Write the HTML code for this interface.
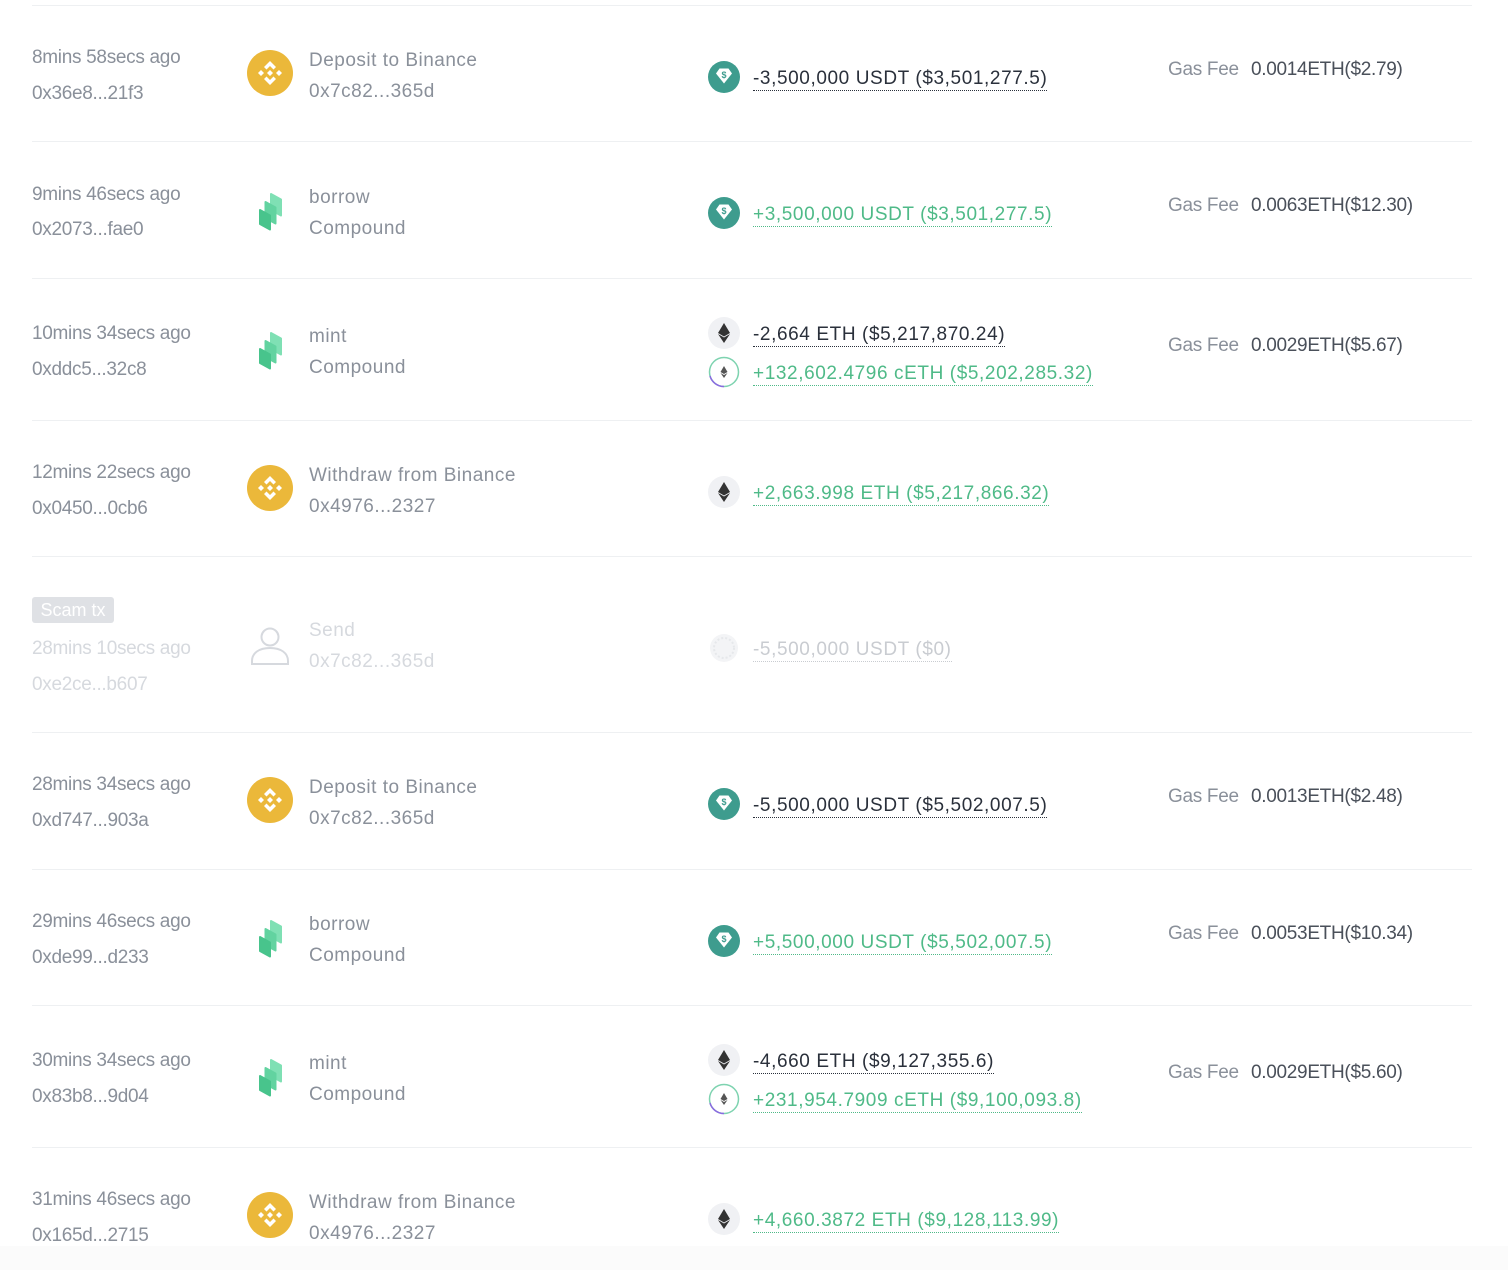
<!DOCTYPE html>
<html><head><meta charset="utf-8"><style>
body{margin:0;width:1508px;height:1270px;background:#fff;position:relative;overflow:hidden;font-family:"Liberation Sans",sans-serif;}
#w{position:absolute;left:0;top:2px;width:1508px;height:1270px}
.t{position:absolute;font-size:19px;line-height:22px;color:#8a909a;white-space:nowrap;letter-spacing:-0.3px}
.n{letter-spacing:0.5px}
.k{letter-spacing:0.6px}
.d{color:#2a303b}.g{color:#4fba88}.f{color:#d6d9de}
.u{border-bottom:1.5px dotted currentColor;padding-bottom:1px}
.sep{position:absolute;left:32px;width:1440px;height:1px;background:#eef0f2}
.i{position:absolute}
.tag{position:absolute;left:32px;top:595px;width:82px;height:26px;background:#dfe1e5;border-radius:3px;color:#fff;font-size:18px;line-height:26px;text-align:center}
</style></head><body>
<svg width="0" height="0" style="position:absolute">
<defs>
<symbol id="bn" viewBox="0 0 46 46"><circle cx="23" cy="23" r="23" fill="#ebb83a"/><g fill="#fff"><path d="M23 11l6 6-2.5 2.5L23 16l-3.5 3.5L17 17z"/><path d="M23 35l6-6-2.5-2.5L23 30l-3.5-3.5L17 29z"/><path d="M11 23l3-3 3 3-3 3z"/><path d="M29 23l3-3 3 3-3 3z"/><path d="M23 20l3 3-3 3-3-3z"/></g></symbol>
<symbol id="cp" viewBox="0 0 46 46">
<path d="M24 6l10 5.5v16l-10-5.5z" fill="#7fe0b4" stroke="#7fe0b4" stroke-width="2" stroke-linejoin="round"/>
<path d="M18.5 14l10 5.5v16l-10-5.5z" fill="#62d3a0" stroke="#62d3a0" stroke-width="2" stroke-linejoin="round"/>
<path d="M13 22l10 5.5v14l-10-5.5z" fill="#48c48c" stroke="#48c48c" stroke-width="2" stroke-linejoin="round"/>
</symbol>
<symbol id="us" viewBox="0 0 32 32"><circle cx="16" cy="16" r="16" fill="#3e9c8e"/><path d="M8 12.5l3.5-5h9l3.5 5-8 10z" fill="#fff"/><text x="16" y="17" font-size="9" font-weight="bold" fill="#3e9c8e" text-anchor="middle" font-family="Liberation Sans">$</text></symbol>
<symbol id="et" viewBox="0 0 32 32"><circle cx="16" cy="16" r="16" fill="#f0f1f4"/><path d="M16 6l-6 10 6 3.5 6-3.5z" fill="#333"/><path d="M16 20.5l-6-3.5 6 9 6-9z" fill="#333"/></symbol>
<symbol id="ce" viewBox="0 0 32 32"><circle cx="16" cy="16" r="14.5" fill="none" stroke="#7ed3b0" stroke-width="1.5"/><path d="M16 30.5A14.5 14.5 0 0 1 2 20" fill="none" stroke="#8a6be0" stroke-width="1.5"/><path d="M16 10l-3.5 6 3.5 2 3.5-2z" fill="#555"/><path d="M16 19l-3.5-2 3.5 5 3.5-5z" fill="#555"/></symbol>
</defs></svg>
<div class="sep" style="top:5px"></div><div class="sep" style="top:141px"></div><div class="sep" style="top:278px"></div><div class="sep" style="top:420px"></div><div class="sep" style="top:556px"></div><div class="sep" style="top:732px"></div><div class="sep" style="top:869px"></div><div class="sep" style="top:1005px"></div><div class="sep" style="top:1147px"></div>
<div id="w">
<!-- row1 -->
<div class="t" style="left:32px;top:45px">8mins 58secs ago</div><div class="t" style="left:32px;top:81px">0x36e8...21f3</div>
<svg class="i" style="left:247px;top:48px" width="46" height="46"><use href="#bn"/></svg>
<div class="t n" style="left:309px;top:48px">Deposit to Binance</div><div class="t n" style="left:309px;top:79px">0x7c82...365d</div>
<svg class="i" style="left:708px;top:59px" width="32" height="32"><use href="#us"/></svg>
<div class="t d k" style="left:753px;top:66px"><span class="u">-3,500,000 USDT ($3,501,277.5)</span></div>
<div class="t" style="left:1168px;top:57px">Gas Fee</div><div class="t" style="left:1251px;top:57px;color:#4a505a">0.0014ETH($2.79)</div>

<!-- row2 -->
<div class="t" style="left:32px;top:182px">9mins 46secs ago</div><div class="t" style="left:32px;top:217px">0x2073...fae0</div>
<svg class="i" style="left:247px;top:186px" width="46" height="46"><use href="#cp"/></svg>
<div class="t n" style="left:309px;top:185px">borrow</div><div class="t n" style="left:309px;top:216px">Compound</div>
<svg class="i" style="left:708px;top:195px" width="32" height="32"><use href="#us"/></svg>
<div class="t g k" style="left:753px;top:202px"><span class="u">+3,500,000 USDT ($3,501,277.5)</span></div>
<div class="t" style="left:1168px;top:193px">Gas Fee</div><div class="t" style="left:1251px;top:193px;color:#4a505a">0.0063ETH($12.30)</div>

<!-- row3 -->
<div class="t" style="left:32px;top:321px">10mins 34secs ago</div><div class="t" style="left:32px;top:357px">0xddc5...32c8</div>
<svg class="i" style="left:247px;top:325px" width="46" height="46"><use href="#cp"/></svg>
<div class="t n" style="left:309px;top:324px">mint</div><div class="t n" style="left:309px;top:355px">Compound</div>
<svg class="i" style="left:708px;top:315px" width="32" height="32"><use href="#et"/></svg>
<div class="t d k" style="left:753px;top:322px"><span class="u">-2,664 ETH ($5,217,870.24)</span></div>
<svg class="i" style="left:708px;top:354px" width="32" height="32"><use href="#ce"/></svg>
<div class="t g k" style="left:753px;top:361px"><span class="u">+132,602.4796 cETH ($5,202,285.32)</span></div>
<div class="t" style="left:1168px;top:333px">Gas Fee</div><div class="t" style="left:1251px;top:333px;color:#4a505a">0.0029ETH($5.67)</div>

<!-- row4 -->
<div class="t" style="left:32px;top:460px">12mins 22secs ago</div><div class="t" style="left:32px;top:496px">0x0450...0cb6</div>
<svg class="i" style="left:247px;top:463px" width="46" height="46"><use href="#bn"/></svg>
<div class="t n" style="left:309px;top:463px">Withdraw from Binance</div><div class="t n" style="left:309px;top:494px">0x4976...2327</div>
<svg class="i" style="left:708px;top:474px" width="32" height="32"><use href="#et"/></svg>
<div class="t g k" style="left:753px;top:481px"><span class="u">+2,663.998 ETH ($5,217,866.32)</span></div>

<!-- row5 scam -->
<div class="tag">Scam tx</div>
<div class="t f" style="left:32px;top:636px">28mins 10secs ago</div><div class="t f" style="left:32px;top:672px">0xe2ce...b607</div>
<svg class="i" style="left:248px;top:621px" width="44" height="44" viewBox="0 0 44 44"><circle cx="22" cy="14" r="8.5" fill="none" stroke="#d6d9de" stroke-width="2"/><path d="M4 41v-3c0-8 7-13 18-13s18 5 18 13v3z" fill="none" stroke="#d6d9de" stroke-width="2"/></svg>
<div class="t f n" style="left:309px;top:618px">Send</div><div class="t f n" style="left:309px;top:649px">0x7c82...365d</div>
<svg class="i" style="left:708px;top:630px" width="32" height="32"><circle cx="16" cy="16" r="14" fill="#f3f4f6"/><circle cx="16" cy="16" r="10" fill="none" stroke="#e6e8eb" stroke-width="2" stroke-dasharray="2 2"/></svg>
<div class="t f k" style="left:753px;top:637px;color:#c9ccd1"><span class="u">-5,500,000 USDT ($0)</span></div>

<!-- row6 -->
<div class="t" style="left:32px;top:772px">28mins 34secs ago</div><div class="t" style="left:32px;top:808px">0xd747...903a</div>
<svg class="i" style="left:247px;top:775px" width="46" height="46"><use href="#bn"/></svg>
<div class="t n" style="left:309px;top:775px">Deposit to Binance</div><div class="t n" style="left:309px;top:806px">0x7c82...365d</div>
<svg class="i" style="left:708px;top:786px" width="32" height="32"><use href="#us"/></svg>
<div class="t d k" style="left:753px;top:793px"><span class="u">-5,500,000 USDT ($5,502,007.5)</span></div>
<div class="t" style="left:1168px;top:784px">Gas Fee</div><div class="t" style="left:1251px;top:784px;color:#4a505a">0.0013ETH($2.48)</div>

<!-- row7 -->
<div class="t" style="left:32px;top:909px">29mins 46secs ago</div><div class="t" style="left:32px;top:945px">0xde99...d233</div>
<svg class="i" style="left:247px;top:913px" width="46" height="46"><use href="#cp"/></svg>
<div class="t n" style="left:309px;top:912px">borrow</div><div class="t n" style="left:309px;top:943px">Compound</div>
<svg class="i" style="left:708px;top:923px" width="32" height="32"><use href="#us"/></svg>
<div class="t g k" style="left:753px;top:930px"><span class="u">+5,500,000 USDT ($5,502,007.5)</span></div>
<div class="t" style="left:1168px;top:921px">Gas Fee</div><div class="t" style="left:1251px;top:921px;color:#4a505a">0.0053ETH($10.34)</div>

<!-- row8 -->
<div class="t" style="left:32px;top:1048px">30mins 34secs ago</div><div class="t" style="left:32px;top:1084px">0x83b8...9d04</div>
<svg class="i" style="left:247px;top:1052px" width="46" height="46"><use href="#cp"/></svg>
<div class="t n" style="left:309px;top:1051px">mint</div><div class="t n" style="left:309px;top:1082px">Compound</div>
<svg class="i" style="left:708px;top:1042px" width="32" height="32"><use href="#et"/></svg>
<div class="t d k" style="left:753px;top:1049px"><span class="u">-4,660 ETH ($9,127,355.6)</span></div>
<svg class="i" style="left:708px;top:1081px" width="32" height="32"><use href="#ce"/></svg>
<div class="t g k" style="left:753px;top:1088px"><span class="u">+231,954.7909 cETH ($9,100,093.8)</span></div>
<div class="t" style="left:1168px;top:1060px">Gas Fee</div><div class="t" style="left:1251px;top:1060px;color:#4a505a">0.0029ETH($5.60)</div>

<!-- row9 -->
<div class="t" style="left:32px;top:1187px">31mins 46secs ago</div><div class="t" style="left:32px;top:1223px">0x165d...2715</div>
<svg class="i" style="left:247px;top:1190px" width="46" height="46"><use href="#bn"/></svg>
<div class="t n" style="left:309px;top:1190px">Withdraw from Binance</div><div class="t n" style="left:309px;top:1221px">0x4976...2327</div>
<svg class="i" style="left:708px;top:1201px" width="32" height="32"><use href="#et"/></svg>
<div class="t g k" style="left:753px;top:1208px"><span class="u">+4,660.3872 ETH ($9,128,113.99)</span></div>
</div>
<div style="position:absolute;left:0;top:1246px;width:1508px;height:24px;background:#fbfbfb"></div>
</body></html>
